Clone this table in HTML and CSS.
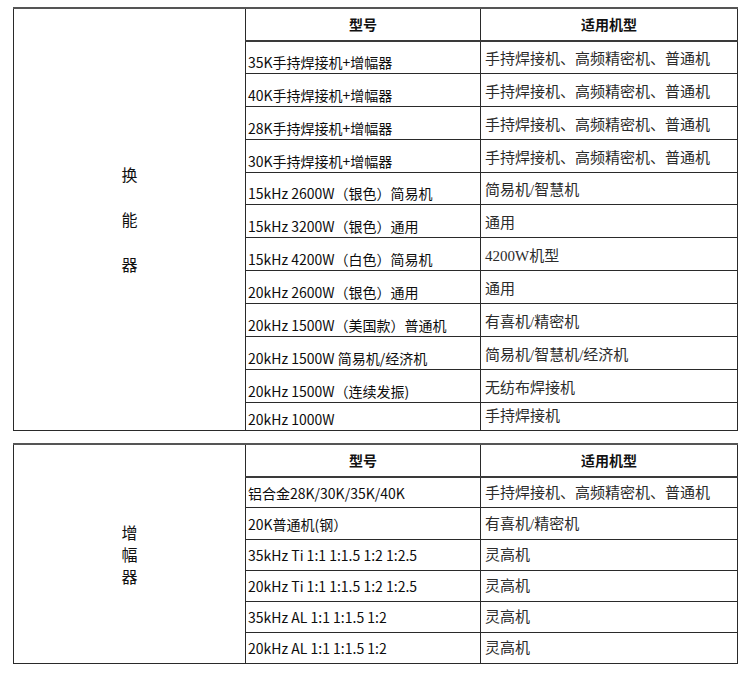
FILE: index.html
```html
<!DOCTYPE html>
<html lang="zh-CN">
<head>
<meta charset="utf-8">
<title>换能器 / 增幅器</title>
<link rel="stylesheet" href="styles.css">
</head>
<body>
<table class="spec spec-a">
  <colgroup><col class="c1"><col class="c2"><col class="c3"></colgroup>
  <tr class="head">
    <td class="label" rowspan="13"><div class="stack wide"><span>换</span><span>能</span><span>器</span></div></td>
    <th>型号</th><th>适用机型</th>
  </tr>
  <tr><td class="model">35K手持焊接机+增幅器</td><td class="use">手持焊接机、高频精密机、普通机</td></tr>
  <tr><td class="model">40K手持焊接机+增幅器</td><td class="use">手持焊接机、高频精密机、普通机</td></tr>
  <tr><td class="model">28K手持焊接机+增幅器</td><td class="use">手持焊接机、高频精密机、普通机</td></tr>
  <tr><td class="model">30K手持焊接机+增幅器</td><td class="use">手持焊接机、高频精密机、普通机</td></tr>
  <tr><td class="model">15kHz 2600W（银色）简易机</td><td class="use">简易机/智慧机</td></tr>
  <tr><td class="model">15kHz 3200W（银色）通用</td><td class="use">通用</td></tr>
  <tr><td class="model">15kHz 4200W（白色）简易机</td><td class="use">4200W机型</td></tr>
  <tr><td class="model">20kHz 2600W（银色）通用</td><td class="use">通用</td></tr>
  <tr><td class="model">20kHz 1500W（美国款）普通机</td><td class="use">有喜机/精密机</td></tr>
  <tr><td class="model">20kHz 1500W 简易机/经济机</td><td class="use">简易机/智慧机/经济机</td></tr>
  <tr><td class="model">20kHz 1500W（连续发振)</td><td class="use">无纺布焊接机</td></tr>
  <tr class="last"><td class="model">20kHz 1000W</td><td class="use">手持焊接机</td></tr>
</table>

<table class="spec spec-b">
  <colgroup><col class="c1"><col class="c2"><col class="c3"></colgroup>
  <tr class="head">
    <td class="label" rowspan="7"><div class="stack tight"><span>增</span><span>幅</span><span>器</span></div></td>
    <th>型号</th><th>适用机型</th>
  </tr>
  <tr><td class="model">铝合金28K/30K/35K/40K</td><td class="use">手持焊接机、高频精密机、普通机</td></tr>
  <tr><td class="model">20K普通机(钢）</td><td class="use">有喜机/精密机</td></tr>
  <tr><td class="model">35kHz Ti 1:1 1:1.5 1:2 1:2.5</td><td class="use">灵高机</td></tr>
  <tr><td class="model">20kHz Ti 1:1 1:1.5 1:2 1:2.5</td><td class="use">灵高机</td></tr>
  <tr><td class="model">35kHz AL 1:1 1:1.5 1:2</td><td class="use">灵高机</td></tr>
  <tr><td class="model">20kHz AL 1:1 1:1.5 1:2</td><td class="use">灵高机</td></tr>
</table>
</body>
</html>
```

FILE: styles.css
```css
html, body {
  background: #ffffff;
}
body {
  margin: 7px 0 0 13px;
  font-family: "Noto Sans CJK SC", "Noto Sans", sans-serif;
  color: #1a1a1a;
}
.spec {
  border-collapse: collapse;
  table-layout: fixed;
  width: 724px;
  border: 1px solid #2a2a2a;
  border-top: 2px solid #555555;
}
.spec-b {
  margin-top: 12px;
}
.c1 { width: 232px; }
.c2 { width: 235px; }
.c3 { width: 257px; }
.spec td, .spec th {
  border: 1px solid #2a2a2a;
  padding: 0;
  white-space: nowrap;
  overflow: hidden;
}
.spec th {
  font-weight: bold;
  font-size: 14px;
  text-align: center;
  vertical-align: middle;
  color: #111;
  border-bottom: 2px solid #3a3a3a;
}
.spec-a tr { height: 32.9px; }
.spec-a tr.head { height: 32.5px; }
.spec-a tr.last { height: 28px; }
.spec-b tr { height: 31.2px; }
.spec-b tr.head { height: 33px; }

.model {
  font-size: 14px;
  line-height: 20px;
  padding-left: 2px !important;
  color: #0d0d0d;
}
.use {
  font-family: "Liberation Serif", "Noto Sans CJK SC", serif;
  font-size: 15px;
  line-height: 20px;
  padding-left: 4px !important;
  color: #2b2b2b;
}
.spec-a .model {
  vertical-align: bottom;
  padding-bottom: 1px !important;
}
.spec-a .use {
  vertical-align: bottom;
  padding-bottom: 4px !important;
}
.spec-b .model, .spec-b .use {
  vertical-align: middle;
}
.label {
  text-align: center;
  vertical-align: middle;
}
.stack {
  display: flex;
  flex-direction: column;
  align-items: center;
  font-size: 16px;
  color: #111;
}
.stack.wide { line-height: 45px; }
.stack.tight { line-height: 22px; margin-top: 0; }
```
